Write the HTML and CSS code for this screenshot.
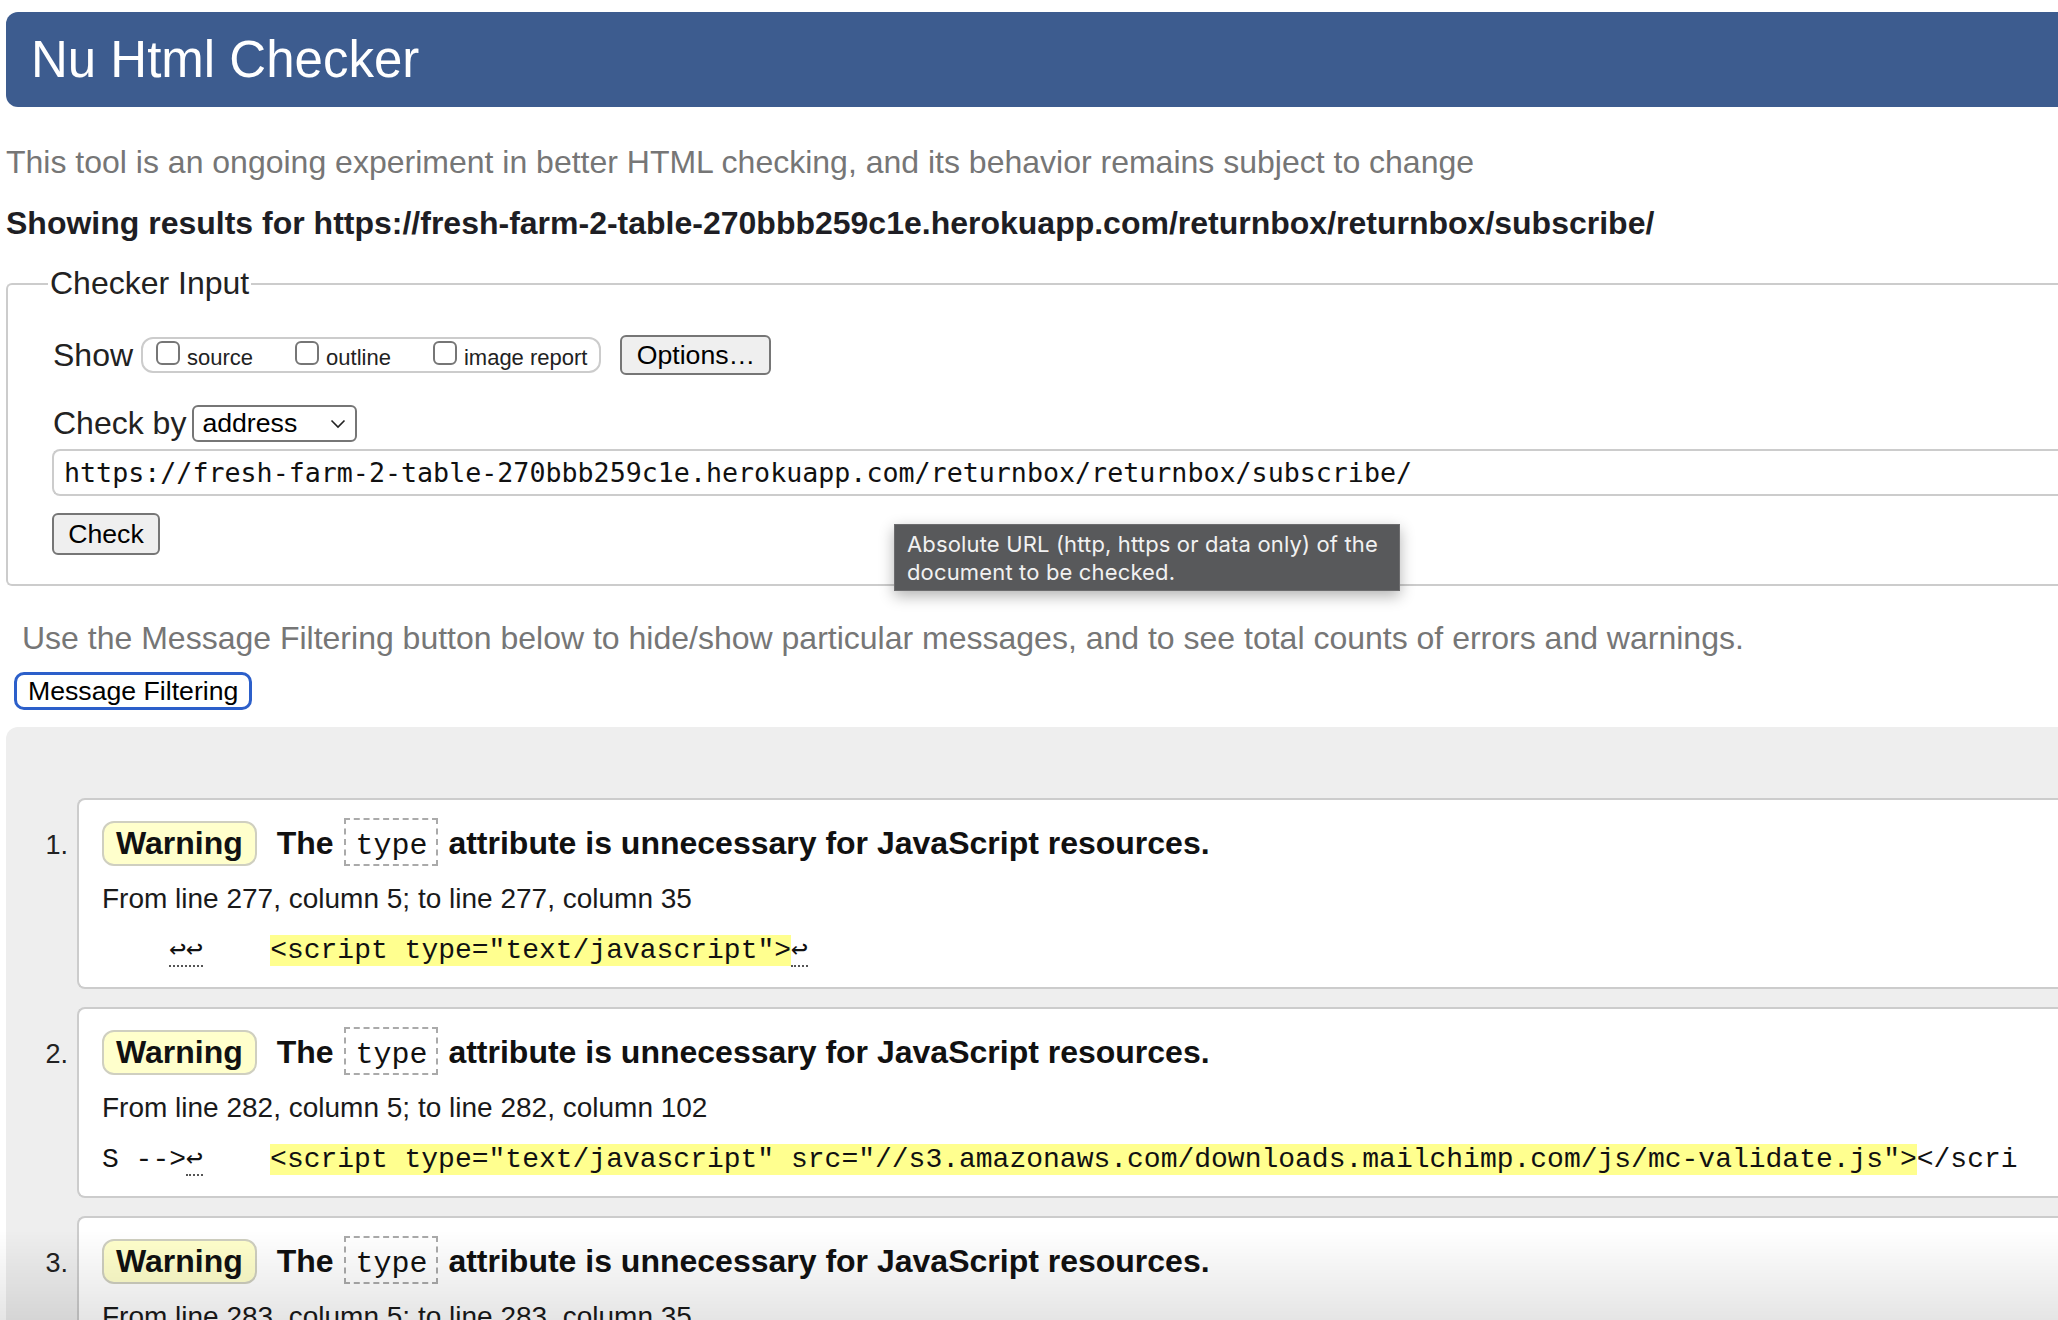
FILE: index.html
```html
<!DOCTYPE html>
<html lang="en">
<head>
<meta charset="utf-8">
<title>Nu Html Checker</title>
<link rel="stylesheet" href="styles.css">
</head>
<body>
<div class="page">
  <header class="banner"><h1>Nu Html Checker</h1></header>
  <p class="intro">This tool is an ongoing experiment in better HTML checking, and its behavior remains subject to change</p>
  <h2 class="results-for">Showing results for https://fresh-farm-2-table-270bbb259c1e.herokuapp.com/returnbox/returnbox/subscribe/</h2>

  <fieldset class="checker">
    <legend>Checker Input</legend>
    <div class="row show-row">
      <span class="lbl show-lbl">Show</span>
      <div class="show-group">
        <span class="opt"><span class="cb"></span>source</span>
        <span class="opt"><span class="cb"></span>outline</span>
        <span class="opt"><span class="cb"></span>image report</span>
      </div>
      <span class="btn options">Options…</span>
    </div>
    <div class="row by-row">
      <span class="lbl by-lbl">Check by</span>
      <span class="select">address<svg class="chev" width="16" height="10" viewBox="0 0 16 10"><polyline points="1.5,1.5 8,8 14.5,1.5" fill="none" stroke="#222" stroke-width="1.6"/></svg></span>
    </div>
    <div class="url">https://fresh-farm-2-table-270bbb259c1e.herokuapp.com/returnbox/returnbox/subscribe/</div>
    <span class="btn check">Check</span>
  </fieldset>

  <div class="tooltip">Absolute URL (http, https or data only) of the<br>document to be checked.</div>

  <p class="filter-note">Use the Message Filtering button below to hide/show particular messages, and to see total counts of errors and warnings.</p>
  <span class="filter-btn">Message Filtering</span>

  <div class="results">
    <ol class="messages">
      <li class="msg-item">
        <span class="num">1.</span>
        <div class="msg-box">
          <p class="msg"><span class="badge">Warning</span> <span class="msg-text">The <code class="kw">type</code> attribute is unnecessary for JavaScript resources.</span></p>
          <p class="loc">From line 277, column 5; to line 277, column 35</p>
          <p class="extract">    <span class="lf">↩↩</span>    <mark>&lt;script type="text/javascript"&gt;</mark><span class="lf">↩</span></p>
        </div>
      </li>
      <li class="msg-item">
        <span class="num">2.</span>
        <div class="msg-box">
          <p class="msg"><span class="badge">Warning</span> <span class="msg-text">The <code class="kw">type</code> attribute is unnecessary for JavaScript resources.</span></p>
          <p class="loc">From line 282, column 5; to line 282, column 102</p>
          <p class="extract">S --&gt;<span class="lf">↩</span>    <mark>&lt;script type="text/javascript" src="//s3.amazonaws.com/downloads.mailchimp.com/js/mc-validate.js"&gt;</mark>&lt;/scri</p>
        </div>
      </li>
      <li class="msg-item">
        <span class="num">3.</span>
        <div class="msg-box">
          <p class="msg"><span class="badge">Warning</span> <span class="msg-text">The <code class="kw">type</code> attribute is unnecessary for JavaScript resources.</span></p>
          <p class="loc">From line 283, column 5; to line 283, column 35</p>
          <p class="extract">    <span class="lf">↩</span>    <mark>&lt;script type="text/javascript"&gt;</mark><span class="lf">↩</span></p>
        </div>
      </li>
    </ol>
  </div>
</div>
<div class="fade"></div>
</body>
</html>
```

FILE: styles.css
```css
html, body {
  margin: 0;
  padding: 0;
  overflow: hidden;
  background: #fff;
}

body {
  font-family: "Liberation Sans", Arial, Helvetica, sans-serif;
  color: #222;
}

.page {
  position: relative;
  width: 2300px;
  padding: 12px 0 0 6px;
}

/* Banner */
.banner {
  height: 95px;
  background: #3d5c8f;
  border-radius: 12px 0 0 12px;
  padding-left: 25px;
}

.banner h1 {
  margin: 0;
  font-size: 51px;
  line-height: 95px;
  font-weight: normal;
  color: #fff;
}

.intro {
  margin: 37px 0 0;
  font-size: 32px;
  line-height: 37px;
  color: #767676;
}

.results-for {
  margin: 24px 0 0;
  font-size: 32px;
  line-height: 37px;
  font-weight: bold;
  color: #1e1e24;
}

/* Checker input fieldset */
.checker {
  margin: 23px 0 0;
  border: 2px solid #cccccc;
  border-right: none;
  border-radius: 6px 0 0 6px;
  padding: 33px 0 29px 44px;
  min-width: 0;
}

.checker legend {
  font-size: 32px;
  line-height: 37px;
  padding: 0 2px;
  margin-left: -4px;
  color: #222;
}

.row {
  display: flex;
  align-items: center;
}

.show-row {
  height: 40px;
}

.by-row {
  height: 37px;
  margin-top: 30px;
}

.lbl {
  font-size: 32px;
  line-height: 37px;
  color: #222;
}

.show-lbl {
  margin-left: 1px;
  margin-right: 8px;
}

.by-lbl {
  margin-left: 1px;
  margin-right: 6px;
}

.show-group {
  box-sizing: border-box;
  height: 36px;
  border: 2px solid #cccccc;
  border-radius: 12px;
  padding: 0 12px 0 13px;
  display: flex;
  align-items: center;
  gap: 42px;
  font-size: 22px;
  line-height: 25px;
  color: #222;
}

.opt {
  white-space: nowrap;
}

.cb {
  display: inline-block;
  box-sizing: border-box;
  width: 24px;
  height: 24px;
  border: 2px solid #767676;
  border-radius: 6px;
  background: #fff;
  margin-right: 7px;
  vertical-align: baseline;
}

.btn {
  box-sizing: border-box;
  display: inline-flex;
  align-items: center;
  justify-content: center;
  background: #efefef;
  border: 2px solid #767676;
  border-radius: 6px;
  font-size: 26.67px;
  color: #000;
}

.options {
  margin-left: 19px;
  width: 151px;
  height: 40px;
}

.select {
  box-sizing: border-box;
  display: inline-flex;
  align-items: center;
  justify-content: space-between;
  width: 165px;
  height: 37px;
  border: 2px solid #767676;
  border-radius: 6px;
  padding: 0 9px 0 8px;
  font-size: 26.67px;
  color: #000;
  background: #fff;
}

.chev {
  display: block;
}

.url {
  box-sizing: border-box;
  margin-top: 7px;
  height: 47px;
  border: 2px solid #cccccc;
  border-right: none;
  border-radius: 8px 0 0 8px;
  padding-left: 10px;
  display: flex;
  align-items: center;
  font-family: "DejaVu Sans Mono", monospace;
  font-size: 26.67px;
  color: #111;
  white-space: nowrap;
}

.check {
  margin-top: 17px;
  width: 108px;
  height: 42px;
  display: flex;
}

/* Tooltip over the form */
.tooltip {
  position: absolute;
  left: 894px;
  top: 524px;
  box-sizing: border-box;
  width: 506px;
  height: 67px;
  padding: 5px 12px 0 12px;
  background: #58595b;
  border: 1px solid #6c6c6e;
  color: #f1f1f1;
  font-family: Inter, "Liberation Sans", sans-serif;
  font-size: 22px;
  line-height: 28px;
  letter-spacing: 0.15px;
  box-shadow: 0 5px 14px rgba(0, 0, 0, 0.3);
}

.filter-note {
  margin: 34px 0 0;
  padding-left: 16px;
  font-size: 32px;
  line-height: 37px;
  color: #767676;
}

.filter-btn {
  box-sizing: border-box;
  display: inline-flex;
  align-items: center;
  margin: 15px 0 0 8px;
  height: 38px;
  padding: 0 11px;
  border: 3px solid #2c5fca;
  border-radius: 10px;
  font-size: 26.67px;
  color: #000;
  background: #fff;
}

/* Results */
.results {
  margin-top: 17px;
  background: #eeeeee;
  border-radius: 12px 0 0 0;
  padding-top: 71px;
  padding-bottom: 40px;
}

.messages {
  list-style: none;
  margin: 0;
  padding: 0;
}

.msg-item {
  display: flex;
  align-items: baseline;
}

.msg-item + .msg-item {
  margin-top: 18px;
}

.num {
  flex: 0 0 71px;
  box-sizing: border-box;
  text-align: right;
  padding-right: 9px;
  font-size: 27px;
  color: #222;
}

.msg-box {
  flex: 1;
  background: #fff;
  border: 2px solid #cccccc;
  border-right: none;
  border-radius: 8px 0 0 8px;
  padding: 18px 0 20px 23px;
}

.msg {
  margin: 0;
  font-size: 32px;
  line-height: 37px;
  font-weight: bold;
  color: #111;
}

.badge {
  display: inline-block;
  box-sizing: border-box;
  height: 45px;
  line-height: 41px;
  padding: 0 12px;
  background: #ffffcc;
  border: 2px solid #cfcfc0;
  border-radius: 12px;
  margin-right: 11px;
}

.kw {
  display: inline-block;
  font-family: "Liberation Mono", "Courier New", monospace;
  font-weight: normal;
  font-size: 30px;
  line-height: 34px;
  padding: 9px 9px 1px;
  border: 2px dashed #aaaaaa;
  margin: 0 1px 0 2px;
}

.loc {
  margin: 17px 0 0;
  font-size: 28px;
  line-height: 32px;
  color: #1a1a1a;
}

.extract {
  margin: 18px 0 0;
  font-family: "Liberation Mono", "Courier New", monospace;
  font-size: 28px;
  line-height: 32px;
  white-space: pre;
  color: #111;
}

.extract mark {
  background: #ffff8f;
  color: inherit;
}

.lf {
  font-family: "DejaVu Sans Mono", monospace;
  border-bottom: 2px dotted #555;
}

.fade {
  position: fixed;
  left: 0;
  right: 0;
  bottom: 0;
  height: 90px;
  background: linear-gradient(to bottom, rgba(0, 0, 0, 0), rgba(0, 0, 0, 0.1));
  pointer-events: none;
}
```
